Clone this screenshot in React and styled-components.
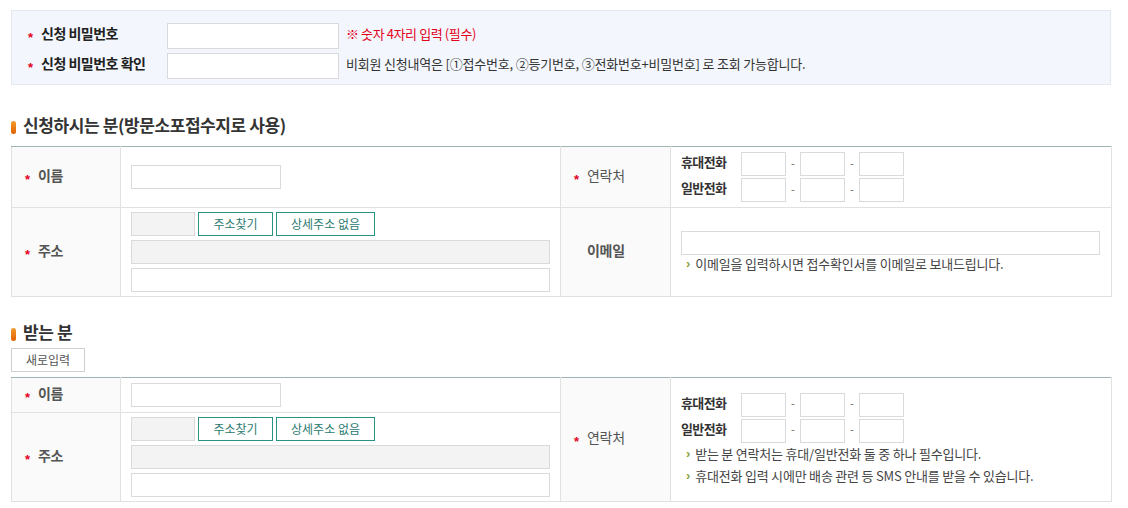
import React from 'react'
import styled, { createGlobalStyle } from 'styled-components'

const GlobalStyle = createGlobalStyle`
  * { box-sizing: border-box; }
  body {
    margin: 0;
    background: #fff;
    font-family: "Noto Sans CJK KR", "Noto Sans", sans-serif;
    font-size: 13px;
    color: #444;
  }
`

const Page = styled.div`
  width: 1100px;
  margin-left: 11px;
  padding-top: 10px;
`

const PasswordBox = styled.div`
  height: 75px;
  border: 1px solid #e4e9ef;
  background: #f3f7fd;
  padding: 12px 0 0 16px;
  display: grid;
  grid-template-columns: 132px 172px auto;
  grid-auto-rows: 26px;
  row-gap: 4px;
  column-gap: 7px;
  align-items: center;
`

const Star = styled.span`
  display: inline-block;
  width: 13px;
  color: #e4001c;
  font-family: "Liberation Sans", sans-serif;
  font-weight: 700;
  font-size: 13px;
  line-height: 12px;
  vertical-align: -3px;
  visibility: ${p => (p.$hidden ? 'hidden' : 'visible')};
`

const BoxLabel = styled.div`
  padding-bottom: 5px;
  font-size: 14px;
  font-weight: 700;
  color: #222;
  letter-spacing: -0.5px;
  white-space: nowrap;
`

const TextInput = styled.input`
  display: block;
  width: ${p => p.$w}px;
  height: ${p => p.$h || 24}px;
  border: 1px solid #dadada;
  background: ${p => (p.$disabled ? '#f3f3f3' : '#fff')};
  margin: 0;
  padding: 0 4px;
  font: inherit;
  outline: none;
`

const RedNote = styled.div`
  padding-bottom: 6px;
  color: #e2001a;
  font-size: 13px;
  letter-spacing: -0.4px;
`

const InfoNote = styled.div`
  padding-bottom: 5px;
  color: #333;
  font-size: 13px;
  letter-spacing: -0.2px;
  white-space: nowrap;
`

const Heading = styled.h3`
  margin: ${p => p.$top}px 0 ${p => p.$bottom}px;
  height: 20px;
  display: flex;
  align-items: center;
  gap: 7px;
  font-size: 17px;
  line-height: 20px;
  font-weight: 700;
  color: #333;
  letter-spacing: -0.4px;
`

const Bar = styled.span`
  display: inline-block;
  width: 5px;
  height: 13px;
  margin-top: 4px;
  border-radius: 3px;
  background: linear-gradient(#f29a2e, #e06000);
`

const PlainButton = styled.button`
  display: block;
  width: 74px;
  height: 24px;
  margin: 0 0 5px;
  padding: 0 0 2px;
  border: 1px solid #cfcfcf;
  background: #fff;
  color: #555;
  font: inherit;
  font-size: 12px;
`

const FormTable = styled.table`
  width: 1100px;
  table-layout: fixed;
  border-collapse: collapse;
  border-top: 1px solid #9fb4b4;
`

const Th = styled.th`
  background: #f9faf9;
  border: 1px solid #e1e1e1;
  border-top: ${p => (p.$first ? '1px solid #9fb4b4' : '1px solid #e1e1e1')};
  padding: 0 0 4px 13px;
  text-align: left;
  font-size: 14px;
  font-weight: ${p => (p.$light ? 400 : 700)};
  color: #555;
  letter-spacing: -0.3px;
  white-space: nowrap;
`

const Td = styled.td`
  border: 1px solid #e1e1e1;
  border-top: ${p => (p.$first ? '1px solid #9fb4b4' : '1px solid #e1e1e1')};
  padding: ${p => p.$pad || '5px 10px'};
  vertical-align: middle;
`

const Stack = styled.div`
  display: flex;
  flex-direction: column;
  gap: ${p => p.$gap || 4}px;
`

const Line = styled.div`
  display: flex;
  align-items: center;
  gap: 3px;
`

const TealButton = styled.button`
  width: ${p => p.$w}px;
  height: 24px;
  margin: 0;
  padding: 0 0 2px;
  border: 1px solid #2a9283;
  background: #fff;
  color: #2b7a70;
  font: inherit;
  font-size: 12px;
`

const PhoneRow = styled.div`
  display: flex;
  align-items: center;
`

const PhoneLabel = styled.span`
  width: 60px;
  padding-bottom: 5px;
  font-size: 13px;
  font-weight: 700;
  color: #333;
  letter-spacing: -0.6px;
`

const Dash = styled.span`
  width: 14px;
  padding-bottom: 3px;
  text-align: center;
  color: #666;
  font-size: 11px;
`

const Note = styled.div`
  display: flex;
  align-items: center;
  gap: 5px;
  padding-left: 5px;
  margin-top: ${p => p.$mt || 0}px;
  line-height: ${p => p.$lh || 18}px;
  font-size: 13px;
  color: #444;
  letter-spacing: -0.2px;
  white-space: nowrap;

  &::before {
    content: '›';
    color: #8aa23e;
    font-family: "Liberation Sans", sans-serif;
    font-weight: 700;
    font-size: 13px;
  }
`

const Label = ({ children, star = true, ...rest }) => (
  <Th {...rest}>
    <Star $hidden={!star}>*</Star>
    {children}
  </Th>
)

const Phones = ({ label }) => (
  <PhoneRow>
    <PhoneLabel>{label}</PhoneLabel>
    <TextInput $w={45} />
    <Dash>-</Dash>
    <TextInput $w={45} />
    <Dash>-</Dash>
    <TextInput $w={45} />
  </PhoneRow>
)

const Address = () => (
  <Stack>
    <Line>
      <TextInput $w={64} $disabled />
      <TealButton $w={75}>주소찾기</TealButton>
      <TealButton $w={99}>상세주소 없음</TealButton>
    </Line>
    <TextInput $w={419} $disabled />
    <TextInput $w={419} />
  </Stack>
)

const Cols = () => (
  <colgroup>
    <col style={{ width: 109 }} />
    <col style={{ width: 440 }} />
    <col style={{ width: 110 }} />
    <col style={{ width: 441 }} />
  </colgroup>
)

const App = () => {
  return (
    <>
      <GlobalStyle />
      <Page>
        <PasswordBox>
          <BoxLabel><Star>*</Star>신청 비밀번호</BoxLabel>
          <TextInput $w={172} $h={26} />
          <RedNote>※ 숫자 4자리 입력 (필수)</RedNote>
          <BoxLabel><Star>*</Star>신청 비밀번호 확인</BoxLabel>
          <TextInput $w={172} $h={26} />
          <InfoNote>비회원 신청내역은 [①접수번호, ②등기번호, ③전화번호+비밀번호] 로 조회 가능합니다.</InfoNote>
        </PasswordBox>

        <Heading $top={30} $bottom={11}><Bar />신청하시는 분(방문소포접수지로 사용)</Heading>
        <FormTable>
          <Cols />
          <tbody>
            <tr>
              <Label $first>이름</Label>
              <Td $first><TextInput $w={150} /></Td>
              <Label $first $light>연락처</Label>
              <Td $first>
                <Stack $gap={2}>
                  <Phones label="휴대전화" />
                  <Phones label="일반전화" />
                </Stack>
              </Td>
            </tr>
            <tr>
              <Label>주소</Label>
              <Td $pad="4px 10px"><Address /></Td>
              <Label star={false}>이메일</Label>
              <Td>
                <TextInput $w={419} />
                <Note>이메일을 입력하시면 접수확인서를 이메일로 보내드립니다.</Note>
              </Td>
            </tr>
          </tbody>
        </FormTable>

        <Heading $top={25} $bottom={6}><Bar />받는 분</Heading>
        <PlainButton>새로입력</PlainButton>
        <FormTable>
          <Cols />
          <tbody>
            <tr>
              <Label $first>이름</Label>
              <Td $first><TextInput $w={150} /></Td>
              <Label $first $light rowSpan={2}>연락처</Label>
              <Td $first rowSpan={2}>
                <Stack $gap={2}>
                  <Phones label="휴대전화" />
                  <Phones label="일반전화" />
                </Stack>
                <Note $lh={22}>받는 분 연락처는 휴대/일반전화 둘 중 하나 필수입니다.</Note>
                <Note $lh={22}>휴대전화 입력 시에만 배송 관련 등 SMS 안내를 받을 수 있습니다.</Note>
              </Td>
            </tr>
            <tr>
              <Label>주소</Label>
              <Td $pad="4px 10px"><Address /></Td>
            </tr>
          </tbody>
        </FormTable>
      </Page>
    </>
  )
}

export default App
